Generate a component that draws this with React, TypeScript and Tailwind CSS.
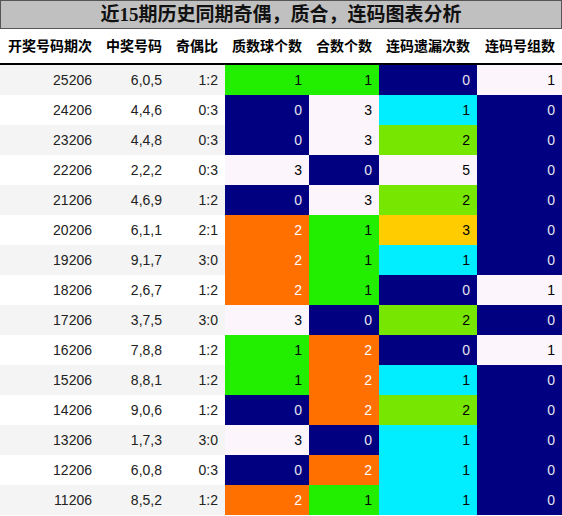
import React from "react";

type C = "g" | "n" | "w" | "o" | "c" | "l" | "y";
const bg: Record<C, string> = {
  g: "bg-[#22ee00] text-black",
  n: "bg-[#000080] text-[#e4e4ee]",
  w: "bg-[#fcf6fc] text-black",
  o: "bg-[#ff7000] text-white",
  c: "bg-[#00eeff] text-black",
  l: "bg-[#77e600] text-black",
  y: "bg-[#ffcc00] text-black",
};

const rows: [string, string, string, [number, C], [number, C], [number, C], [number, C]][] = [
  ["25206", "6,0,5", "1:2", [1, "g"], [1, "g"], [0, "n"], [1, "w"]],
  ["24206", "4,4,6", "0:3", [0, "n"], [3, "w"], [1, "c"], [0, "n"]],
  ["23206", "4,4,8", "0:3", [0, "n"], [3, "w"], [2, "l"], [0, "n"]],
  ["22206", "2,2,2", "0:3", [3, "w"], [0, "n"], [5, "w"], [0, "n"]],
  ["21206", "4,6,9", "1:2", [0, "n"], [3, "w"], [2, "l"], [0, "n"]],
  ["20206", "6,1,1", "2:1", [2, "o"], [1, "g"], [3, "y"], [0, "n"]],
  ["19206", "9,1,7", "3:0", [2, "o"], [1, "g"], [1, "c"], [0, "n"]],
  ["18206", "2,6,7", "1:2", [2, "o"], [1, "g"], [0, "n"], [1, "w"]],
  ["17206", "3,7,5", "3:0", [3, "w"], [0, "n"], [2, "l"], [0, "n"]],
  ["16206", "7,8,8", "1:2", [1, "g"], [2, "o"], [0, "n"], [1, "w"]],
  ["15206", "8,8,1", "1:2", [1, "g"], [2, "o"], [1, "c"], [0, "n"]],
  ["14206", "9,0,6", "1:2", [0, "n"], [2, "o"], [2, "l"], [0, "n"]],
  ["13206", "1,7,3", "3:0", [3, "w"], [0, "n"], [1, "c"], [0, "n"]],
  ["12206", "6,0,8", "0:3", [0, "n"], [2, "o"], [1, "c"], [0, "n"]],
  ["11206", "8,5,2", "1:2", [2, "o"], [1, "g"], [1, "c"], [0, "n"]],
];

const headers = ["开奖号码期次", "中奖号码", "奇偶比", "质数球个数", "合数个数", "连码遗漏次数", "连码号组数"];
const grid = "grid grid-cols-[99px_70px_56px_84px_70px_98px_85px]";

export default function App() {
  return (
    <div
      className="w-[562px] h-[516px] bg-white overflow-hidden"
      style={{ fontFamily: '"Liberation Sans", "Noto Sans CJK SC", sans-serif' }}
    >
      <div
        className="h-[29px] border border-[#555555] bg-[#c0c0c0] flex items-center justify-center text-[19px] font-bold text-[#111] leading-none"
        style={{ fontFamily: '"Liberation Serif", "Noto Sans CJK SC", serif' }}
      >
        近15期历史同期奇偶，质合，连码图表分析
      </div>
      <div className={`${grid} h-[36px] border-b-2 border-black`}>
        {headers.map((h) => (
          <div key={h} className="flex items-center justify-end pr-[7px] text-[14px] font-bold text-black leading-none">
            {h}
          </div>
        ))}
      </div>
      {rows.map((r, i) => (
        <div key={r[0]} className={`${grid} h-[30px] text-[14px] leading-none ${i % 2 === 0 ? "bg-[#f4f4f4]" : "bg-white"}`}>
          {[r[0], r[1], r[2]].map((t, j) => (
            <div key={j} className="flex items-center justify-end pr-[7px] text-[#222]">
              {t}
            </div>
          ))}
          {[r[3], r[4], r[5], r[6]].map(([v, c], j) => (
            <div key={"c" + j} className={`flex items-center justify-end pr-[7px] ${bg[c]}`}>
              {v}
            </div>
          ))}
        </div>
      ))}
    </div>
  );
}
